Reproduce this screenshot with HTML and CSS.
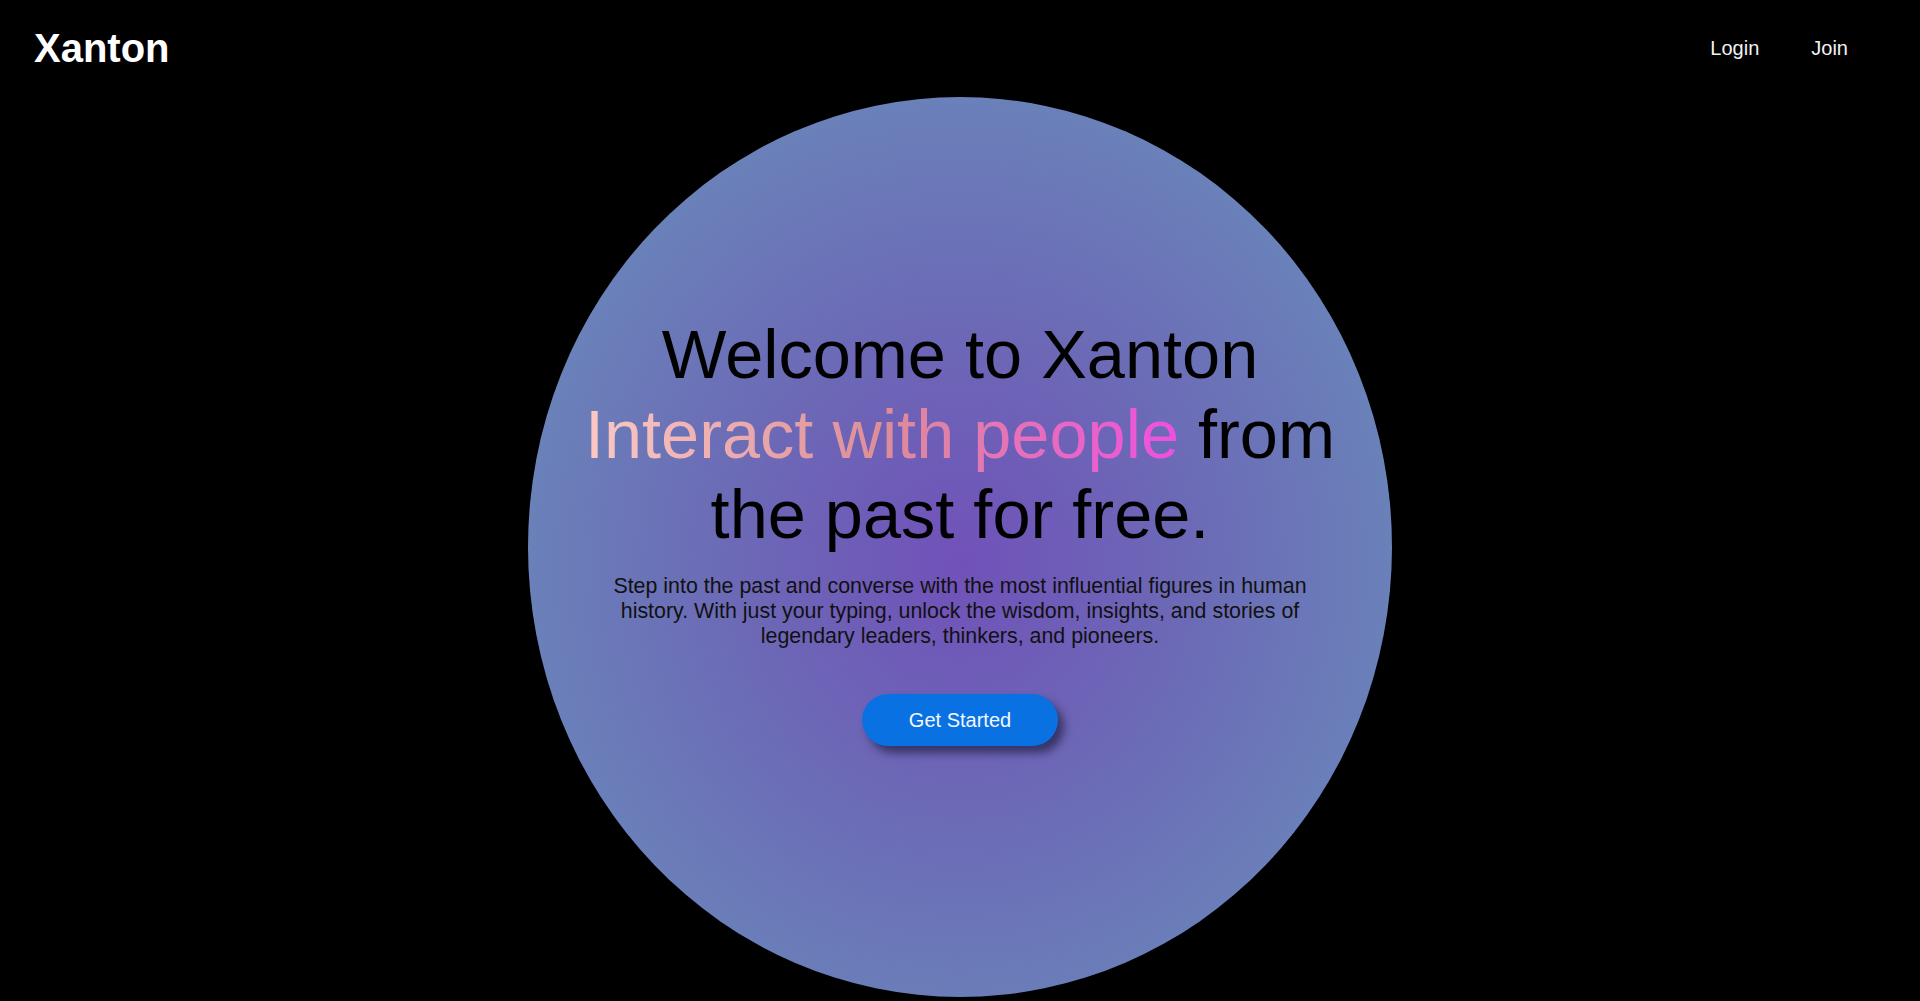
FILE: index.html
```html
<!DOCTYPE html>
<html lang="en">
<head>
<meta charset="utf-8">
<title>Xanton</title>
<link rel="stylesheet" href="styles.css">
</head>
<body>
<header class="topbar">
  <div class="logo">Xanton</div>
  <nav class="nav">
    <a class="nav-link" href="#">Login</a>
    <a class="nav-link" href="#">Join</a>
  </nav>
</header>
<main class="stage">
  <section class="orb">
    <div class="hero">
      <h1 class="title">Welcome to Xanton<br><span class="grad">Interact with people</span> from the past for free.</h1>
      <p class="lead">Step into the past and converse with the most influential figures in human history. With just your typing, unlock the wisdom, insights, and stories of legendary leaders, thinkers, and pioneers.</p>
      <a class="cta" href="#">Get Started</a>
    </div>
  </section>
</main>
</body>
</html>
```
FILE: styles.css
```css
* { box-sizing: border-box; }
html, body {
  margin: 0;
  padding: 0;
  background: #000;
  height: 100%;
  overflow: hidden;
}
body {
  font-family: "Liberation Sans", Arial, sans-serif;
  color: #fff;
}
.topbar {
  display: flex;
  justify-content: space-between;
  align-items: center;
  padding: 25px 72px 0 34px;
  height: 71px;
}
.logo {
  font-size: 40px;
  font-weight: 700;
  line-height: 46px;
  color: #fff;
}
.nav {
  display: flex;
  gap: 52px;
}
.nav-link {
  color: #f2f2f2;
  text-decoration: none;
  font-size: 20px;
  line-height: 23px;
}
.stage {
  display: flex;
  justify-content: center;
  padding-top: 26px;
}
.orb {
  width: 864px;
  height: 900px;
  border-radius: 50%;
  background: radial-gradient(ellipse at 50% 52%, #7151b9 0%, #6c68b6 35%, #6a80b9 70%, #6a90bc 100%);
  display: flex;
  align-items: center;
  justify-content: center;
  padding-bottom: 33px;
}
.hero {
  width: 780px;
  display: flex;
  flex-direction: column;
  align-items: center;
  text-align: center;
}
.title {
  margin: 0;
  font-size: 68.5px;
  line-height: 80px;
  font-weight: 400;
  color: #000;
}
.grad {
  background: linear-gradient(90deg, #fbc9c4 0%, #dc8e98 50%, #ef4fe0 100%);
  -webkit-background-clip: text;
  background-clip: text;
  color: transparent;
}
.lead {
  margin: 19px 0 0;
  width: 740px;
  font-size: 21.4px;
  line-height: 25px;
  color: #111;
}
.cta {
  margin-top: 45px;
  display: inline-block;
  width: 196px;
  height: 52px;
  line-height: 52px;
  border-radius: 26px;
  background: #0a71e2;
  color: #f2f8ff;
  text-decoration: none;
  font-size: 20px;
  box-shadow: 6px 7px 8px rgba(20, 20, 50, 0.6);
}
```
